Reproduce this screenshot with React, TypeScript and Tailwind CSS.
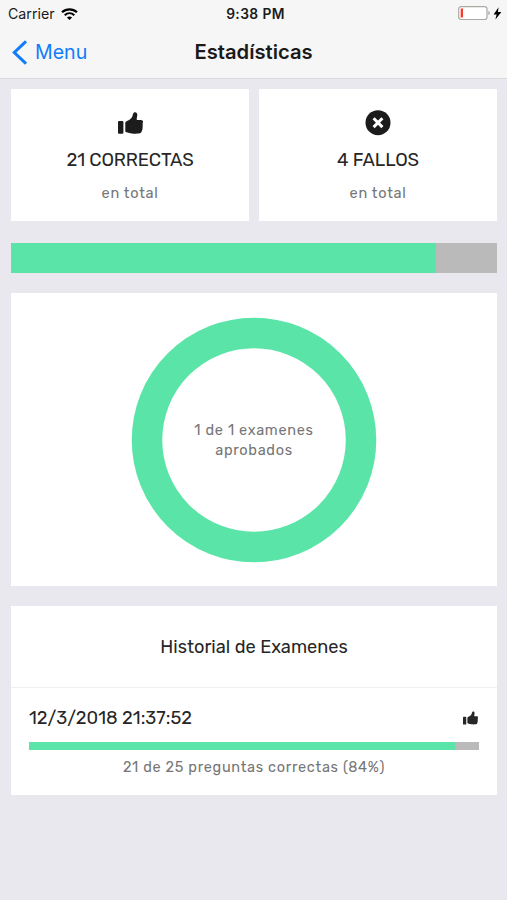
interface Exam {
  date: string;
  correct: number;
  total: number;
}

const EXAMS: Exam[] = [{ date: "12/3/2018 21:37:52", correct: 21, total: 25 }];

function ThumbIcon({ className }: { className?: string }) {
  return (
    <svg viewBox="0 0 25 22" className={className} fill="currentColor" aria-hidden="true">
      <rect x="0" y="9" width="5.4" height="12.8" rx="1" />
      <path d="M16.400 0.300c1.700-.5 2.900.7 2.900 2.500 0 1.800-.6 3-.6 4.400 0 .6.400.8 1 .8h3.200c1.400 0 2.100.7 2.100 1.800 0 .7-.2 1.200-.5 1.600.4.600.4 1.600 0 2.300.3.700.3 1.600-.1 2.300.3.800.2 1.700-.4 2.300-.1 2-1.200 3.100-3.400 3.300-2.100.2-4.700.2-6.700-.1-2-.2-3.600-.7-5.200-1.200-.9-.3-1.400-.6-1.400-1.400v-7.700c0-1.100.6-1.600 1.700-2.100 2.300-1 4.300-2.500 5.200-4.300.6-1.300.7-4 2.200-4.500z" />
    </svg>
  );
}

function CrossIcon() {
  return (
    <svg viewBox="0 0 26 26" className="h-[26px] w-[26px]" aria-hidden="true">
      <circle cx="13" cy="12.700" r="12.500" fill="#1c1c1c" />
      <path d="M8.600 8.300l8.800 8.800M17.400 8.300l-8.800 8.800" stroke="#fff" strokeWidth="3" />
    </svg>
  );
}

function StatusBar() {
  return (
    <div className="grid h-7 grid-cols-3 items-center pr-1 pl-[8px] font-['Inter',sans-serif] text-[#1a1a1a]">
      <div className="flex items-center gap-[6px]">
        <span className="text-[14.2px] leading-7">Carrier</span>
        <svg viewBox="0 0 17 12" className="h-[12px] w-[17px]" fill="none" stroke="#000" aria-hidden="true">
          <path d="M1 4.300c4.300-4 10.700-4 15 0" strokeWidth="2.200" />
          <path d="M3.700 7.200c2.800-2.600 6.800-2.600 9.600 0" strokeWidth="2" />
          <path d="M8.500 12L5.900 9.400c1.500-1.300 3.700-1.300 5.200 0z" fill="#000" stroke="none" />
        </svg>
      </div>
      <span className="text-center text-[13.8px] font-semibold leading-7 tracking-[0.4px]">9:38 PM</span>
      <svg viewBox="0 0 45 16" className="h-4 w-[45px] justify-self-end" aria-hidden="true">
        <rect x="0.700" y="0.700" width="28.300" height="12.800" rx="2.500" fill="#fff" stroke="#aaa9a4" strokeWidth="1.200" />
        <rect x="2.700" y="2.500" width="2.300" height="9" fill="#f93b31" />
        <path d="M30.300 5v4c1-.3 1.500-1.100 1.500-2s-.5-1.700-1.500-2z" fill="#aaa9a4" />
        <path d="M40.600 1.300l-5 7.100h3l-1.200 5.200 6-7.500h-3.500z" fill="#000" />
      </svg>
    </div>
  );
}

function NavBar() {
  return (
    <div className="grid h-12 grid-cols-[1fr_auto_1fr] items-center font-['Inter',sans-serif]">
      <button type="button" className="flex items-center gap-[8px] pl-[12px] text-[#117dfa]">
        <svg viewBox="0 0 15 25" className="h-[25px] w-[15px]" fill="none" stroke="currentColor" strokeWidth="3" aria-hidden="true">
          <path d="M14 1.300L2.300 12.500 14 23.700" />
        </svg>
        <span className="text-[19.600px] leading-6">Menu</span>
      </button>
      <h1 className="text-[20.2px] font-semibold leading-6 text-[#1a1a1a]">Estadísticas</h1>
    </div>
  );
}

function StatCard({ icon, title }: { icon: React.ReactNode; title: string }) {
  return (
    <div className="flex h-[132px] flex-1 flex-col items-center bg-white pt-[21px]">
      <div className="flex h-[26px] items-center">{icon}</div>
      <p className="mt-[12px] text-[18.5px] leading-6 tracking-[-0.15px]">{title}</p>
      <p className="mt-[11px] text-[14.5px] leading-5 tracking-[0.7px] text-[#767676]">en total</p>
    </div>
  );
}

function Progress({ value, className }: { value: number; className: string }) {
  return (
    <div className={`bg-[#bababa] ${className}`}>
      <div className="h-full bg-[#5be4a8]" style={{ width: `${value}%` }} />
    </div>
  );
}

function ExamRow({ exam }: { exam: Exam }) {
  const percent = Math.round((exam.correct / exam.total) * 100);
  return (
    <li className="px-[18px] pt-[18px]">
      <div className="flex items-center justify-between">
        <span className="text-[18.3px] leading-6">{exam.date}</span>
        <ThumbIcon className="mr-px h-[14px] w-[15px]" />
      </div>
      <Progress value={94.6} className="mt-[12px] h-[8px]" />
      <p className="mt-[7px] text-center text-[14.5px] leading-5 tracking-[0.69px] text-[#767676]">
        {exam.correct} de {exam.total} preguntas correctas ({percent}%)
      </p>
    </li>
  );
}

export default function App() {
  return (
    <div className="min-h-[900px] bg-[#e9e8ee] font-['Rubik','Roboto',sans-serif] text-[#262626]">
      <header className="h-[79px] border-b border-[#dadadd] bg-[#f6f6f6]">
        <StatusBar />
        <NavBar />
      </header>

      <main className="flex flex-col pt-[10px] pr-[10px] pl-[11px]">
        <section className="flex gap-[10px]">
          <StatCard icon={<ThumbIcon className="h-[22px] w-[25px] text-[#1c1c1c]" />} title="21 CORRECTAS" />
          <StatCard icon={<CrossIcon />} title="4 FALLOS" />
        </section>

        <Progress value={87.4} className="mt-[22px] h-[30px]" />

        <section className="mt-[20px] grid h-[293px] place-items-center bg-white">
          <svg viewBox="0 0 246 246" className="col-start-1 row-start-1 size-[246px]" aria-hidden="true">
            <circle cx="123" cy="123" r="107" fill="none" stroke="#5be4a8" strokeWidth="30.500" />
          </svg>
          <p className="col-start-1 row-start-1 w-[130px] text-center text-[14.5px] leading-5 tracking-[0.7px] text-[#767676]">
            1 de 1 examenes aprobados
          </p>
        </section>

        <section className="mt-[20px] h-[189px] bg-white">
          <h2 className="flex h-[82px] items-center justify-center border-b border-[#f0f0f2] text-[18.2px] leading-6">
            Historial de Examenes
          </h2>
          <ul>
            {EXAMS.map((exam) => (
              <ExamRow key={exam.date} exam={exam} />
            ))}
          </ul>
        </section>
      </main>
    </div>
  );
}
